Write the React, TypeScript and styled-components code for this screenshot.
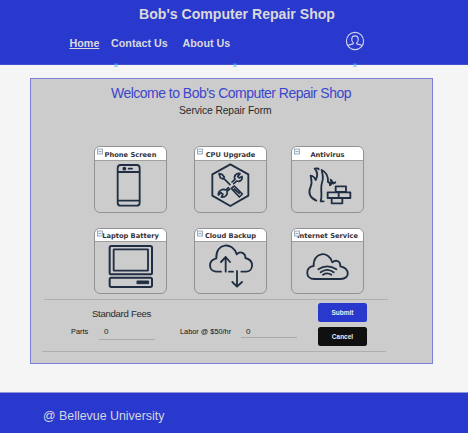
import React from 'react';
import styled, { createGlobalStyle } from 'styled-components';

const Global = createGlobalStyle`
  * { box-sizing: border-box; }
  body { margin: 0; background: #f5f5f5; font-family: "Liberation Sans", Arial, sans-serif; }
`;

const Page = styled.div`
  width: 468px;
  height: 433px;
  display: flex;
  flex-direction: column;
  overflow: hidden;
`;

const Header = styled.header`
  position: relative;
  height: 65px;
  flex: none;
  background: #2938cd;
  border-bottom: 1px solid #4451cf;
  color: #dadada;
  padding-top: 6px;
`;

const ShopName = styled.div`
  padding-left: 139px;
  font: bold 14.1px/17px "Liberation Sans", Arial, sans-serif;
  white-space: nowrap;
`;

const Nav = styled.nav`
  display: flex;
  align-items: center;
  height: 20px;
  margin-top: 8px;
  padding-left: 69.5px;
`;

const NavLink = styled.a<{ $active?: boolean; $width: number }>`
  width: ${(p) => p.$width}px;
  font: bold 10.75px/14px "Liberation Sans", Arial, sans-serif;
  padding-top: 4px;
  white-space: nowrap;
  text-decoration: ${(p) => (p.$active ? 'underline' : 'none')};
`;

const UserIcon = styled.svg`
  width: 20px;
  height: 20px;
  display: block;
`;

const Anchor = styled.svg<{ $x: number }>`
  position: absolute;
  left: ${(p) => p.$x}px;
  top: 62.5px;
  width: 4px;
  height: 4px;
`;

const Panel = styled.main`
  width: 403px;
  height: 286px;
  flex: none;
  margin: 13px 0 0 30px;
  background: #ccc;
  border: 1px solid #7a80d8;
`;

const Welcome = styled.h1`
  margin: 5px 0 0 80px;
  font: 14px/18px "Liberation Sans", Arial, sans-serif;
  letter-spacing: -0.52px;
  color: #3b46cc;
  white-space: nowrap;
`;

const FormName = styled.h2`
  margin: 3px 0 0 148px;
  font: 10.3px/12px "Liberation Sans", Arial, sans-serif;
  letter-spacing: -0.1px;
  color: #2a2a2a;
  white-space: nowrap;
`;

const Cards = styled.div`
  display: grid;
  grid-template-columns: 73px 73px 73px;
  column-gap: 27px;
  row-gap: 15px;
  margin: 29px 0 0 63px;

  & > :nth-child(3n) { margin-left: -3px; margin-right: 3px; }
`;

const Card = styled.section<{ $height: number }>`
  height: ${(p) => p.$height}px;
  border: 1px solid #929292;
  border-radius: 6px;
  overflow: hidden;
`;

const CardHead = styled.div<{ $height: number }>`
  position: relative;
  height: ${(p) => p.$height}px;
  background: #fff;
  border-bottom: 1px solid #a0a0a0;
  text-align: center;
  font: bold 6.7px/${(p) => p.$height}px "DejaVu Sans", Verdana, sans-serif;
  padding-top: 1px;
  color: #34333a;
  white-space: nowrap;
`;

const CheckMark = styled.svg`
  position: absolute;
  left: 2px;
  top: 1px;
  width: 6px;
  height: 7px;
`;

const Drawing = styled.svg`
  display: block;
  width: 71px;
  height: 51px;
  fill: none;
  stroke: #202e43;
  stroke-width: 5.5;
  stroke-linecap: round;
  stroke-linejoin: round;
`;

const Fees = styled.div`
  width: 345px;
  margin: 5px 0 0 12px;
`;

const Rule = styled.div<{ $indent: number }>`
  width: 344px;
  height: 1px;
  margin-left: ${(p) => p.$indent}px;
  background: #afafaf;
`;

const FeeBody = styled.div`
  display: flex;
  height: 51px;
`;

const FeeArea = styled.div`
  width: 275px;
  flex: none;
`;

const FeeTitle = styled.div`
  margin: 8px 0 0 49px;
  font: 9.6px/11px "Liberation Sans", Arial, sans-serif;
  letter-spacing: -0.3px;
  color: #2a2a2a;
`;

const FeeRow = styled.div`
  display: flex;
  margin-top: 6px;
  padding-left: 28px;
`;

const FeeLabel = styled.label<{ $width: number }>`
  width: ${(p) => p.$width}px;
  padding-top: 2px;
  font: 7.35px/9px "Liberation Sans", Arial, sans-serif;
  color: #111;
  white-space: nowrap;
`;

const FeeValue = styled.div<{ $gap: number; $height: number }>`
  width: 56px;
  height: ${(p) => p.$height}px;
  margin-right: ${(p) => p.$gap}px;
  padding: 2px 0 0 5px;
  border-bottom: 1px solid #aaa;
  font: 8px/9px "Liberation Sans", Arial, sans-serif;
  color: #222;
`;

const Actions = styled.div`
  display: flex;
  flex-direction: column;
  gap: 5px;
  padding-top: 3px;
`;

const Button = styled.button<{ $color: string }>`
  width: 49px;
  height: 19px;
  padding: 1px 0 0;
  border: 0;
  border-radius: 2.5px;
  background: ${(p) => p.$color};
  color: #ececf2;
  font: bold 6.5px/18px "Liberation Sans", Arial, sans-serif;
`;

const Footer = styled.footer`
  height: 41px;
  flex: none;
  margin-top: 28px;
  padding: 16px 0 0 43px;
  background: #2938cd;
  border-top: 1px solid #8f96de;
  color: #d6d6e2;
  font: 12.4px/15px "Liberation Sans", Arial, sans-serif;
`;

const services = [
  {
    name: 'Phone Screen',
    art: (
      <>
        <rect x="98" y="75" width="66" height="122" rx="9" />
        <path d="M99 96H163M99 182H163M131 86H141" />
        <circle cx="118" cy="86" r="3" />
      </>
    ),
  },
  {
    name: 'CPU Upgrade',
    art: (
      <>
        <path d="M136 73L190 103V167L136 198L82 167V103Z" />
        <path d="M102 101L111 103L118 111L114 117L106 113ZM116 115L135 134M139 145L148 138L172 162L163 171ZM148 147L163 160" strokeWidth="5" />
        <path d="M141 126L150 118C145 108 154 98 165 101L158 109L163 114L171 109C174 119 165 127 155 123L146 131M130 143L123 150C114 145 99 151 100 165L108 158L114 163L109 171C122 173 129 163 126 154L134 147" strokeWidth="5" />
      </>
    ),
  },
  {
    name: 'Antivirus',
    art: (
      <>
        <path d="M109 182C89 173 84 158 92 140C98 127 93 116 92 107Q102 108 107 120C114 106 113 95 104 86Q116 84 116 88M131 184H122C128 165 120 146 126 128C132 112 127 100 125 90C138 96 145 109 144 126Q151 127 150 136C155 133 155 126 152 119Q158 123 159 131L166 127" />
        <path d="M167 139H198V156H167ZM143 157H176V174H143ZM176 157H211V174H176ZM155 174H187V190H155Z" />
      </>
    ),
  },
  {
    name: 'Laptop Battery',
    art: (
      <>
        <rect x="74" y="78" width="127" height="85" rx="5" strokeWidth="6" />
        <rect x="86" y="88" width="103" height="64" rx="1" />
        <rect x="74" y="173" width="127" height="28" rx="5" strokeWidth="6" />
        <rect x="157" y="183" width="34" height="8" fill="#202e43" strokeWidth="3" />
      </>
    ),
  },
  {
    name: 'Cloud Backup',
    art: (
      <path d="M108 155H93C70 154 68 121 94 115C91 68 144 64 155 103C165 91 182 99 181 114C210 121 205 155 183 155H169M122 155V111M108 126L122 111L135 126M132 155H144M156 153V199M142 186L156 200L171 186" />
    ),
  },
  {
    name: 'Internet Service',
    art: (
      <path d="M103 177C74 177 76 139 101 138C99 95 146 91 157 127C169 117 182 124 181 139C210 145 211 177 182 177ZM115 148Q142 130 169 148M122 157Q142 142 161 157M129 164Q142 156 154 164" />
    ),
  },
];

export default function App() {
  return (
    <Page>
      <Global />
      <Header>
        <ShopName>Bob's Computer Repair Shop</ShopName>
        <Nav>
          <NavLink $active $width={41.5}>Home</NavLink>
          <NavLink $width={71.5}>Contact Us</NavLink>
          <NavLink $width={162.5}>About Us</NavLink>
          <UserIcon viewBox="0 0 20 20" fill="none" stroke="#d0d3ee" strokeWidth="1.15">
            <circle cx="10" cy="10" r="8.6" />
            <path d="M3.2 14.6C4.3 13.4 7.4 13.5 8.2 12.8V11.5C6.1 10.2 5.9 4.8 10 4.8S13.9 10.2 11.8 11.5V12.8C12.6 13.5 15.7 13.4 16.8 14.6" />
          </UserIcon>
        </Nav>
        {[114, 233, 353].map((x) => (
          <Anchor key={x} $x={x} viewBox="0 0 4 4" stroke="#359bed" strokeWidth="1.2">
            <path d="M.5 .5L3.5 3.5M3.5 .5L.5 3.5" />
          </Anchor>
        ))}
      </Header>
      <Panel>
        <Welcome>Welcome to Bob's Computer Repair Shop</Welcome>
        <FormName>Service Repair Form</FormName>
        <Cards>
          {services.map(({ name, art }, i) => (
            <Card key={name} $height={i < 3 ? 67 : 66}>
              <CardHead $height={i < 3 ? 14 : 13}>
                {name}
                <CheckMark viewBox="0 0 6 7" fill="#eef3fa" stroke="#8799ac" strokeWidth=".8">
                  <rect x=".5" y="1" width="5" height="5" />
                  <path d="M1.5 3.5H4.5" />
                </CheckMark>
              </CardHead>
              <Drawing viewBox={`${i % 3 === 2 ? 36 : 30} ${i < 3 ? 63 : 66} 213 153`}>{art}</Drawing>
            </Card>
          ))}
        </Cards>
        <Fees>
          <Rule $indent={1} />
          <FeeBody>
            <FeeArea>
              <FeeTitle>Standard Fees</FeeTitle>
              <FeeRow>
                <FeeLabel $width={28}>Parts</FeeLabel>
                <FeeValue $gap={25} $height={15}>0</FeeValue>
                <FeeLabel $width={61}>Labor @ $50/hr</FeeLabel>
                <FeeValue $gap={0} $height={13}>0</FeeValue>
              </FeeRow>
            </FeeArea>
            <Actions>
              <Button $color="#2938cd">Submit</Button>
              <Button $color="#101010">Cancel</Button>
            </Actions>
          </FeeBody>
          <Rule $indent={-1} />
        </Fees>
      </Panel>
      <Footer>@ Bellevue University</Footer>
    </Page>
  );
}
